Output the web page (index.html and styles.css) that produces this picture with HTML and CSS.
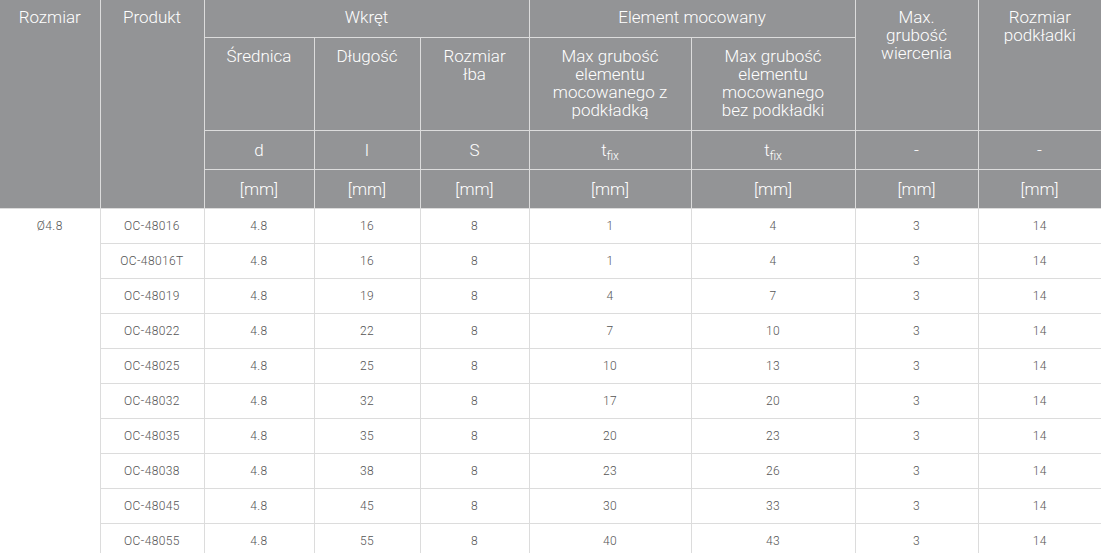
FILE: index.html
```html
<!DOCTYPE html>
<html lang="pl">
<head>
<meta charset="utf-8">
<link rel="stylesheet" href="styles.css">
</head>
<body>
<table class="spec">
  <colgroup>
    <col class="c1"><col class="c2"><col class="c3"><col class="c4"><col class="c5"><col class="c6"><col class="c7"><col class="c8"><col class="c9">
  </colgroup>
  <thead>
    <tr class="h1">
      <th rowspan="4">Rozmiar</th>
      <th rowspan="4">Produkt</th>
      <th colspan="3">Wkręt</th>
      <th colspan="2">Element mocowany</th>
      <th rowspan="2">Max.<br>grubość<br>wiercenia</th>
      <th rowspan="2">Rozmiar<br>podkładki</th>
    </tr>
    <tr class="h2">
      <th>Średnica</th>
      <th>Długość</th>
      <th>Rozmiar<br>łba</th>
      <th>Max grubość<br>elementu<br>mocowanego z<br>podkładką</th>
      <th>Max grubość<br>elementu<br>mocowanego<br>bez podkładki</th>
    </tr>
    <tr class="h3">
      <th>d</th>
      <th>l</th>
      <th>S</th>
      <th>t<sub>fix</sub></th>
      <th>t<sub>fix</sub></th>
      <th>-</th>
      <th>-</th>
    </tr>
    <tr class="h4">
      <th>[mm]</th><th>[mm]</th><th>[mm]</th><th>[mm]</th><th>[mm]</th><th>[mm]</th><th>[mm]</th>
    </tr>
  </thead>
  <tbody>
    <tr><td rowspan="10" class="size">Ø4.8</td><td>OC-48016</td><td>4.8</td><td>16</td><td>8</td><td>1</td><td>4</td><td>3</td><td>14</td></tr>
    <tr><td>OC-48016T</td><td>4.8</td><td>16</td><td>8</td><td>1</td><td>4</td><td>3</td><td>14</td></tr>
    <tr><td>OC-48019</td><td>4.8</td><td>19</td><td>8</td><td>4</td><td>7</td><td>3</td><td>14</td></tr>
    <tr><td>OC-48022</td><td>4.8</td><td>22</td><td>8</td><td>7</td><td>10</td><td>3</td><td>14</td></tr>
    <tr><td>OC-48025</td><td>4.8</td><td>25</td><td>8</td><td>10</td><td>13</td><td>3</td><td>14</td></tr>
    <tr><td>OC-48032</td><td>4.8</td><td>32</td><td>8</td><td>17</td><td>20</td><td>3</td><td>14</td></tr>
    <tr><td>OC-48035</td><td>4.8</td><td>35</td><td>8</td><td>20</td><td>23</td><td>3</td><td>14</td></tr>
    <tr><td>OC-48038</td><td>4.8</td><td>38</td><td>8</td><td>23</td><td>26</td><td>3</td><td>14</td></tr>
    <tr><td>OC-48045</td><td>4.8</td><td>45</td><td>8</td><td>30</td><td>33</td><td>3</td><td>14</td></tr>
    <tr><td>OC-48055</td><td>4.8</td><td>55</td><td>8</td><td>40</td><td>43</td><td>3</td><td>14</td></tr>
  </tbody>
</table>
</body>
</html>
```
FILE: styles.css
```css
html, body {
  margin: 0;
  padding: 0;
  background: #ffffff;
}
.spec {
  width: 1101px;
  border-collapse: collapse;
  table-layout: fixed;
  font-family: "Roboto", "Liberation Sans", sans-serif;
}
.c1 { width: 100px; }
.c2 { width: 104px; }
.c3 { width: 110px; }
.c4 { width: 106px; }
.c5 { width: 109px; }
.c6 { width: 162px; }
.c7 { width: 164px; }
.c8 { width: 123px; }
.c9 { width: 123px; }

.spec th {
  background: #939496;
  color: #ffffff;
  font-weight: 300;
  font-size: 17px;
  line-height: 18px;
  text-align: center;
  vertical-align: top;
  padding: 8px 2px 0;
  border: 1px solid #dcdcdc;
}
.spec thead tr:first-child th { border-top: 0; }
.spec th:first-child { border-left: 0; }
.spec tr.h1 th:last-child { border-right: 0; }
.spec tr.h3 th:last-child, .spec tr.h4 th:last-child, .spec tr.h2 th:last-child { border-right: 1px solid #dcdcdc; }

.spec tr.h1 { height: 37px; }
.spec tr.h2 { height: 93px; }
.spec tr.h2 th { padding-top: 9px; }
.spec tr.h3 { height: 39px; }
.spec tr.h3 th, .spec tr.h4 th {
  vertical-align: middle;
  padding-top: 0;
}
.spec tr.h4 { height: 39px; }
.spec sub {
  font-size: 12px;
  vertical-align: -4px;
  line-height: 0;
}

.spec td {
  height: 34px;
  padding: 0;
  border: 1px solid #dcdcdc;
  text-align: center;
  vertical-align: middle;
  color: #555555;
  font-size: 12px;
  font-weight: 300;
  letter-spacing: 0.4px;
}
.spec td.size {
  vertical-align: top;
  padding-top: 10px;
  border-left: 0;
  border-bottom: 0;
}
.spec tbody tr td:last-child { border-right: 0; }
```
